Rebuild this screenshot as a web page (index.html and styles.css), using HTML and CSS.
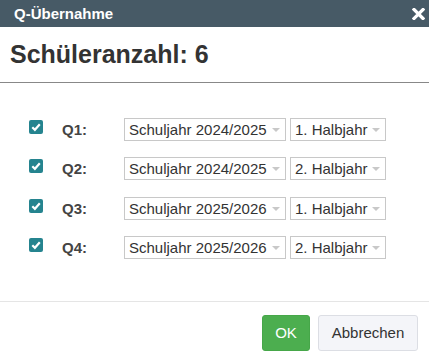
FILE: index.html
```html
<!DOCTYPE html>
<html lang="de">
<head>
  <meta charset="UTF-8">
  <title>Q-Übernahme</title>
  <meta name="viewport" content="width=device-width, initial-scale=1.0">
  <link rel="stylesheet" href="styles.css">
</head>
<body>
  <div class="dialog">
    <!-- Titelleiste -->
    <div class="titlebar">
      <span class="title">Q-Übernahme</span>
      <svg class="close" width="13" height="12" viewBox="0 0 13 12">
        <path d="M2 1.5 L11 10.5 M11 1.5 L2 10.5" stroke="#fff" stroke-width="3.2" stroke-linecap="square"/>
      </svg>
    </div>

    <div class="head">
      <h2>Schüleranzahl: 6</h2>
    </div>

    <!-- Halbjahre -->
    <div class="content">
      <div class="row">
        <span class="check"><svg width="14" height="14" viewBox="0 0 14 14"><rect width="14" height="14" rx="2" fill="#25848f"/><path d="M3.3 7.2 L5.9 9.8 L10.8 4.3" stroke="#fff" stroke-width="2.2" fill="none"/></svg></span>
        <span class="label">Q1:</span>
        <span class="select year">Schuljahr 2024/2025</span>
        <span class="select half">1. Halbjahr</span>
      </div>
      <div class="row">
        <span class="check"><svg width="14" height="14" viewBox="0 0 14 14"><rect width="14" height="14" rx="2" fill="#25848f"/><path d="M3.3 7.2 L5.9 9.8 L10.8 4.3" stroke="#fff" stroke-width="2.2" fill="none"/></svg></span>
        <span class="label">Q2:</span>
        <span class="select year">Schuljahr 2024/2025</span>
        <span class="select half">2. Halbjahr</span>
      </div>
      <div class="row">
        <span class="check"><svg width="14" height="14" viewBox="0 0 14 14"><rect width="14" height="14" rx="2" fill="#25848f"/><path d="M3.3 7.2 L5.9 9.8 L10.8 4.3" stroke="#fff" stroke-width="2.2" fill="none"/></svg></span>
        <span class="label">Q3:</span>
        <span class="select year">Schuljahr 2025/2026</span>
        <span class="select half">1. Halbjahr</span>
      </div>
      <div class="row">
        <span class="check"><svg width="14" height="14" viewBox="0 0 14 14"><rect width="14" height="14" rx="2" fill="#25848f"/><path d="M3.3 7.2 L5.9 9.8 L10.8 4.3" stroke="#fff" stroke-width="2.2" fill="none"/></svg></span>
        <span class="label">Q4:</span>
        <span class="select year">Schuljahr 2025/2026</span>
        <span class="select half">2. Halbjahr</span>
      </div>
    </div>

    <div class="footer">
      <button class="btn ok">OK</button>
      <button class="btn cancel">Abbrechen</button>
    </div>
  </div>
</body>
</html>
```

FILE: styles.css
```css
body {
  margin: 0;
  background: #fff;
  font-family: "Liberation Sans", Arial, sans-serif;
  color: #333;
}
.titlebar {
  height: 27px;
  background: #475a66;
  display: flex;
  align-items: center;
  justify-content: space-between;
  padding: 0 4px 0 14px;
}
.title {
  color: #fff;
  font-weight: bold;
  font-size: 15px;
}
.close {
  display: block;
}
.head {
  padding: 13px 10px 13px;
  border-bottom: 1px solid #888;
}
.head h2 {
  margin: 0;
  font-size: 25px;
  line-height: 29px;
  font-weight: bold;
  color: #333;
}
.content {
  padding: 35px 0 25px 29px;
  border-bottom: 1px solid #e5e5e5;
}
.row {
  display: flex;
  align-items: center;
  height: 23px;
  margin-bottom: 16.4px;
}
.check {
  align-self: flex-start;
  margin-top: 2px;
  width: 14px;
  height: 14px;
}
.check svg {
  display: block;
}
.label {
  margin-left: 19px;
  width: 62px;
  font-weight: bold;
  font-size: 15px;
  line-height: 23px;
  color: #444;
}
.select {
  position: relative;
  box-sizing: border-box;
  height: 23px;
  border: 1px solid #c8c8c8;
  font-size: 15px;
  line-height: 21px;
  padding-left: 4px;
  color: #333;
  background: #fff;
}
.select::after {
  content: "";
  position: absolute;
  right: 5px;
  top: 9px;
  border-left: 4px solid transparent;
  border-right: 4px solid transparent;
  border-top: 4px solid #c8c8c8;
}
.year {
  width: 162px;
}
.half {
  width: 96px;
  margin-left: 4px;
}
.footer {
  display: flex;
  justify-content: flex-end;
  gap: 8px;
  padding: 13px 11px 0 0;
}
.btn {
  height: 36px;
  font-family: "Liberation Sans", Arial, sans-serif;
  font-size: 15px;
  border-radius: 3px;
  cursor: pointer;
}
.ok {
  width: 48px;
  background: #4cae4f;
  border: 1px solid #46a749;
  color: #fff;
}
.cancel {
  width: 100px;
  background: #f4f5f9;
  border: 1px solid #dcdee4;
  color: #333;
}
```
